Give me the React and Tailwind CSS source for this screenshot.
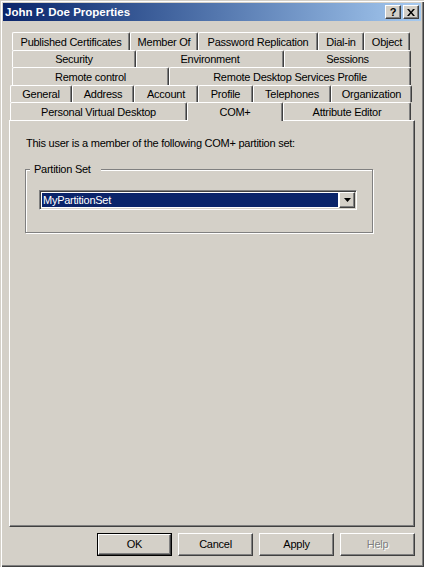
const raised =
  "border border-t-white border-l-white border-r-[#404040] border-b-[#404040] shadow-[inset_-1px_-1px_#808080]";

const ROWS = [
  {
    h: "h-[18px]",
    pad: "pl-[3px]",
    tabs: [
      { label: "Published Certificates", w: "w-[118px]" },
      { label: "Member Of", w: "w-[68px]" },
      { label: "Password Replication", w: "w-[120px]" },
      { label: "Dial-in", w: "w-[46px]" },
      { label: "Object", w: "w-[46px]" },
    ],
  },
  {
    h: "h-[17px]",
    pad: "pl-[3px]",
    tabs: [
      { label: "Security", w: "w-[124px]" },
      { label: "Environment", w: "w-[148px]" },
      { label: "Sessions", w: "w-[127px]" },
    ],
  },
  {
    h: "h-[18px]",
    pad: "pl-[3px]",
    tabs: [
      { label: "Remote control", w: "w-[157px]" },
      { label: "Remote Desktop Services Profile", w: "w-[242px]" },
    ],
  },
  {
    h: "h-[17px]",
    pad: "pl-[1px]",
    tabs: [
      { label: "General", w: "w-[62px]" },
      { label: "Address", w: "w-[62px]" },
      { label: "Account", w: "w-[64px]" },
      { label: "Profile", w: "w-[55px]" },
      { label: "Telephones", w: "w-[78px]" },
      { label: "Organization", w: "w-[81px]" },
    ],
  },
  {
    h: "h-[18px]",
    pad: "pl-[1px]",
    tabs: [
      { label: "Personal Virtual Desktop", w: "w-[177px]" },
      { label: "COM+", w: "w-[96px]", active: true },
      { label: "Attribute Editor", w: "w-[128px]" },
    ],
  },
];

function Tab({ label, w, active }) {
  return (
    <div
      className={`${w} shrink-0 flex items-center justify-center pt-px border-t border-l border-r border-t-white border-l-white border-r-[#404040] shadow-[inset_-1px_0_#808080] rounded-t-[2px] bg-[#d4d0c8] ${
        active ? "relative z-10 h-[19px] self-start" : "h-full"
      }`}
    >
      {label}
    </div>
  );
}

function Button({ children, isDefault, disabled }) {
  return (
    <div
      className={`w-[75px] h-[23px] flex items-center justify-center ${
        isDefault ? "border border-black" : ""
      }`}
    >
      <div
        className={`w-full h-full flex items-center justify-center ${raised} ${
          disabled ? "text-[#808080] [text-shadow:1px_1px_#fff]" : "text-black"
        }`}
      >
        {children}
      </div>
    </div>
  );
}

export default function App() {
  return (
    <div className="w-[424px] h-[567px] bg-[#d4d0c8] p-[3px] flex flex-col text-[11px] leading-[13px] tracking-[-0.25px] text-black font-['Liberation_Sans',Arial,sans-serif] shadow-[inset_1px_1px_#d4d0c8,inset_2px_2px_#fff,inset_-1px_-1px_#404040,inset_-2px_-2px_#808080]">
      {/* title bar */}
      <div className="h-[18px] flex items-center bg-gradient-to-r from-[#0a246a] to-[#a6caf0] pl-[2px] pr-[2px]">
        <span className="flex-1 text-white font-bold text-[11.5px] tracking-normal">
          John P. Doe Properties
        </span>
        <div className="flex gap-[2px]">
          <div className={`w-[16px] h-[14px] bg-[#d4d0c8] flex items-center justify-center font-bold text-[11px] leading-none ${raised}`}>
            ?
          </div>
          <div className={`w-[16px] h-[14px] bg-[#d4d0c8] flex items-center justify-center ${raised}`}>
            <svg width="8" height="7" viewBox="0 0 8 7">
              <path d="M0 0h2l2 2.5L6 0h2L5 3.5 8 7H6L4 4.5 2 7H0l3-3.5z" fill="#000" />
            </svg>
          </div>
        </div>
      </div>

      <div className="px-[6px] flex flex-col flex-1">
        {/* tab rows */}
        <div className="mt-[11px] flex flex-col">
          {ROWS.map((row, i) => (
            <div key={i} className={`${row.h} ${row.pad} flex`}>
              {row.tabs.map((t) => (
                <Tab key={t.label} {...t} />
              ))}
            </div>
          ))}
        </div>

        {/* panel */}
        <div className="h-[407px] border-t border-l border-t-white border-l-white border-r border-b border-r-[#404040] border-b-[#404040] shadow-[inset_-1px_-1px_#808080] pl-[15px] pt-[16px]">
          <p className="ml-px">This user is a member of the following COM+ partition set:</p>

          <div className="mt-[19px] w-[348px] h-[64px] border border-[#808080] shadow-[inset_1px_1px_#fff,1px_1px_#fff] flex flex-col">
            <span className="-mt-[7px] ml-[4px] pl-[4px] pr-[10px] self-start bg-[#d4d0c8]">Partition Set</span>

            <div className="mt-[14px] ml-[13px] w-[318px] h-[20px] border border-t-[#808080] border-l-[#808080] border-r-white border-b-white shadow-[inset_1px_1px_#404040,inset_-1px_-1px_#d4d0c8] p-px">
              <div className="h-full bg-white flex">
                <div className="flex-1 m-px bg-[#0a246a] text-white flex items-center px-px">
                  MyPartitionSet
                </div>
                <div className={`w-[16px] h-full bg-[#d4d0c8] flex items-center justify-center ${raised}`}>
                  <svg width="7" height="4" viewBox="0 0 7 4">
                    <path d="M0 0h7L3.5 4z" fill="#000" />
                  </svg>
                </div>
              </div>
            </div>
          </div>
        </div>

        {/* buttons */}
        <div className="mt-[6px] flex justify-end gap-[6px]">
          <Button isDefault>OK</Button>
          <Button>Cancel</Button>
          <Button>Apply</Button>
          <Button disabled>Help</Button>
        </div>
      </div>
    </div>
  );
}
